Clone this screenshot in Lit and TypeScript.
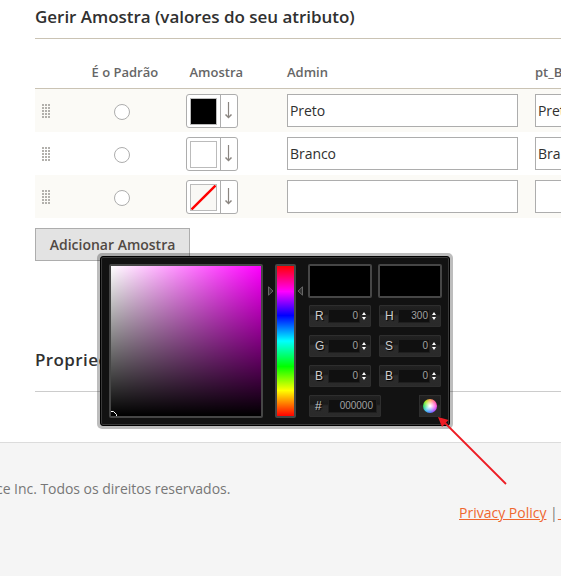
import { LitElement, html, css } from "lit";
import { customElement, property } from "lit/decorators.js";
import { styleMap } from "lit/directives/style-map.js";

interface Swatch {
  name: string;
  color: string | null;
}

const SWATCHES: Swatch[] = [
  { name: "Preto", color: "#000" },
  { name: "Branco", color: "#fff" },
  { name: "", color: null },
];

@customElement("swatch-button")
class SwatchButton extends LitElement {
  @property() color: string | null = null;

  static styles = css`
    :host { display: block; }
    .box {
      box-sizing: border-box;
      display: flex;
      width: 52px;
      height: 34px;
      background: #fff;
      border: 1px solid #adadad;
      border-radius: 3px;
    }
    .well { box-sizing: border-box; width: 34px; padding: 3px; border-right: 1px solid #adadad; }
    .chip {
      box-sizing: border-box;
      width: 27px;
      height: 27px;
      border: 1px solid #bbb;
      background: #f9f8f5;
    }
    svg { display: block; }
  `;

  render() {
    const fill = this.color ? { background: this.color } : {};
    return html`<div class="box">
      <div class="well">
        <div class="chip" style=${styleMap(fill)}>
          ${this.color
            ? ""
            : html`<svg width="25" height="25"><path d="M.5 24.5 24.5 .5" stroke="#f00" stroke-width="2.4" /></svg>`}
        </div>
      </div>
      <svg width="16" height="32" fill="none" stroke="#8a8580">
        <path d="M7.5 7V22" stroke-width="1.2" /><path d="M4.5 19.5 7.5 22.5 10.5 19.5" stroke-width="1.5" />
      </svg>
    </div>`;
  }
}

@customElement("channel-field")
class ChannelField extends LitElement {
  @property() label = "";
  @property() value = "";

  static styles = css`
    :host {
      box-sizing: border-box;
      display: flex;
      width: 62px;
      height: 22px;
      padding: 3px 0 0 5px;
      background: linear-gradient(#222, #1a1a1a 40%, #2b2b2b 50%, #2a2a2a);
      border: 1px solid #2e2e2e;
      border-radius: 1px;
      font: 12px "Liberation Sans", Arial, sans-serif;
      color: #ccc;
    }
    :host([wide]) { width: 72px; }
    .label { width: 13px; line-height: 14px; text-shadow: 1px 1px 1px #000; font-size: 12px; }
    .value {
      box-sizing: border-box;
      width: 32px;
      height: 14px;
      padding-right: 2px;
      line-height: 13px;
      font-size: 10px;
      text-align: right;
      color: #a0a0a0;
      background: #101010;
      box-shadow: inset 0 0 0 1px #1f1f1f;
    }
    :host([wide]) .value { width: 49px; padding-right: 4px; }
    svg { display: block; margin: 3px 0 0 2px; }
    :host([wide]) svg { display: none; }
  `;

  render() {
    return html`<div class="label">${this.label}</div>
      <div class="value">${this.value}</div>
      <svg width="5" height="9" fill="#fff"><path d="M0 3 2 0 4 3zM0 5H4L2 8z" /></svg>`;
  }
}

@customElement("color-picker")
class ColorPicker extends LitElement {
  static styles = css`
    :host {
      box-sizing: border-box;
      display: block;
      width: 356px;
      height: 176px;
      padding: 3px;
      border-radius: 5px;
      background: rgba(0, 0, 0, 0.26);
    }
    .panel {
      box-sizing: border-box;
      display: flex;
      height: 170px;
      padding: 7px 0 0 8px;
      background: #121212;
      border: 1px solid #000;
      border-radius: 3px;
      box-shadow: inset 0 0 0 1px #393939;
    }
    .shade {
      width: 150px;
      height: 150px;
      border: 2px solid #464646;
      border-radius: 2px;
      background: linear-gradient(transparent, #000), linear-gradient(90deg, #fff, #f0f);
    }
    .shade svg { display: block; margin-top: 145px; }
    .pointer { display: block; width: 7px; height: 10px; margin-top: 22px; }
    .pointer.left { margin-left: 4px; }
    .pointer.right { margin-right: 4px; }
    .hue {
      width: 17px;
      height: 150px;
      margin: 0 1px;
      border: 2px solid #464646;
      border-radius: 2px;
      background: linear-gradient(#f00, #f0f 17%, #00f 33%, #0ff 50%, #0f0 67%, #ff0 83%, #f00);
    }
    .side { width: 134px; }
    .previews { display: flex; gap: 6px; }
    .preview {
      width: 60px;
      height: 30px;
      border: 2px solid #464646;
      border-radius: 2px;
      background: #000;
    }
    .fields { display: grid; grid-template-columns: 62px 62px; gap: 8px; margin: 7px 0 0 1px; }
    .last { display: flex; justify-content: space-between; margin: 8px 1px 0; }
    .submit {
      display: flex;
      align-items: center;
      justify-content: center;
      width: 20px;
      height: 20px;
      border: 1px solid #2e2e2e;
      background: linear-gradient(#222, #1a1a1a 40%, #2b2b2b 50%, #2a2a2a);
    }
    .wheel {
      width: 14px;
      height: 14px;
      margin-left: -1px;
      border-radius: 50%;
      background: radial-gradient(#fff 5%, rgba(255, 255, 255, 0.35) 45%, transparent 65%),
        conic-gradient(from 0deg, #ffa050, #ff60a0, #ff50e0, #b050ff, #5080ff, #40c8f0, #30e060, #a0e820, #ffa050);
    }
  `;

  render() {
    const rows = [["R", "0"], ["H", "300"], ["G", "0"], ["S", "0"], ["B", "0"], ["B", "0"]];
    return html`<div class="panel">
      <div class="shade">
        <svg width="8" height="5" fill="none" stroke="#fff"><path d="M0 .5H2.5L5.5 3.5V5" /></svg>
      </div>
      <svg class="pointer left" viewBox="0 0 7 10"><path d="M1.5 .8V9.2L6 5z" fill="#333" stroke="#777" stroke-width=".8" /></svg>
      <div class="hue"></div>
      <svg class="pointer right" viewBox="0 0 7 10"><path d="M5.5 .8V9.2L1 5z" fill="#333" stroke="#777" stroke-width=".8" /></svg>
      <div class="side">
        <div class="previews"><div class="preview"></div><div class="preview"></div></div>
        <div class="fields">
          ${rows.map(([l, v]) => html`<channel-field label=${l} value=${v}></channel-field>`)}
        </div>
        <div class="last">
          <channel-field wide label="#" value="000000"></channel-field>
          <div class="submit"><div class="wheel"></div></div>
        </div>
      </div>
    </div>`;
  }
}

@customElement("app-root")
class AppRoot extends LitElement {
  static styles = css`
    :host {
      position: relative;
      display: block;
      width: 561px;
      height: 576px;
      overflow: hidden;
      background: #fff;
      font-family: "Open Sans", sans-serif;
      font-size: 14px;
      color: #303030;
    }
    .content { box-sizing: border-box; height: 442px; padding-left: 35px; }
    .title {
      box-sizing: border-box;
      height: 39px;
      padding-top: 5px;
      border-bottom: 1px solid #cac3b4;
      font-size: 17px;
      font-weight: 600;
      line-height: 24px;
      letter-spacing: -0.03px;
      white-space: nowrap;
    }
    .title.second {
      height: 53px;
      margin-top: 78px;
      padding-top: 9px;
      border-color: #ccc;
      letter-spacing: 0.4px;
    }
    .row {
      display: grid;
      grid-template-columns: 36px 101px 115px 248px 231px;
      box-sizing: border-box;
      height: 43px;
      padding-top: 5px;
    }
    .row:nth-child(even) { background: #fbfaf6; }
    .head {
      height: 50px;
      padding-top: 23px;
      border-bottom: 1px solid #cac3b4;
      font-size: 13px;
      font-weight: 600;
      line-height: 20px;
      color: #666;
      white-space: nowrap;
    }
    .head .default { padding-left: 20.5px; }
    .head .sample { padding-left: 17.5px; }
    .grip {
      width: 8px;
      height: 14px;
      margin: 10px 0 0 7px;
      background: repeating-linear-gradient(90deg, transparent 0 2px, var(--gap) 2px 3px),
        repeating-linear-gradient(#b2b0ac 0 2px, var(--gap) 2px 3px);
      --gap: #fbfaf6;
    }
    .row:nth-child(odd) .grip { --gap: #fff; }
    .radio {
      box-sizing: border-box;
      width: 16px;
      height: 16px;
      margin: 10px 0 0 43px;
      border: 1px solid #adadad;
      border-radius: 50%;
      background: #fff;
    }
    swatch-button { margin-left: 14px; }
    .input {
      box-sizing: border-box;
      width: 231px;
      height: 33px;
      padding-left: 2px;
      border: 1px solid #adadad;
      background: #fff;
      line-height: 32px;
      letter-spacing: -0.05px;
    }
    .add {
      display: block;
      box-sizing: border-box;
      width: 155px;
      height: 33px;
      margin-top: 10px;
      padding: 0;
      border: 1px solid #adadad;
      background: #e3e3e3;
      font: 600 14px "Open Sans", sans-serif;
      color: #514943;
      white-space: nowrap;
    }
    .footer {
      box-sizing: border-box;
      height: 134px;
      padding-top: 36px;
      border-top: 1px solid #dcdcdc;
      background: #f5f5f5;
      line-height: 20px;
      white-space: nowrap;
      color: #777;
    }
    .copyright { margin-left: -4px; letter-spacing: -0.04px; }
    .links { margin: 4px 0 0 459px; }
    .links a { color: #ef672f; text-decoration: underline; }
    color-picker { position: absolute; left: 97px; top: 253px; }
    .pointer { position: absolute; left: 430px; top: 410px; }
  `;

  render() {
    return html`
      <div class="content">
        <div class="title">Gerir Amostra (valores do seu atributo)</div>
        <div class="table">
          <div class="row head">
            <div></div>
            <div class="default">É o Padrão</div>
            <div class="sample">Amostra</div>
            <div>Admin</div>
            <div>pt_BR</div>
          </div>
          ${SWATCHES.map(
            (s) => html`<div class="row">
              <div class="grip"></div>
              <div class="radio"></div>
              <swatch-button .color=${s.color}></swatch-button>
              <div class="input">${s.name}</div>
              <div class="input">${s.name}</div>
            </div>`
          )}
        </div>
        <button class="add">Adicionar Amostra</button>
        <div class="title second">Propriedades</div>
      </div>
      <div class="footer">
        <div class="copyright">ce Inc. Todos os direitos reservados.</div>
        <div class="links"><a>Privacy Policy</a> |<a>&nbsp;Account</a></div>
      </div>
      <color-picker></color-picker>
      <svg class="pointer" width="90" height="90">
        <path d="M13 11 76 74" stroke="#ed1c24" stroke-width="1.8" />
        <path d="M8 7 18.5 10 12 17z" fill="#ed1c24" />
      </svg>
    `;
  }
}
